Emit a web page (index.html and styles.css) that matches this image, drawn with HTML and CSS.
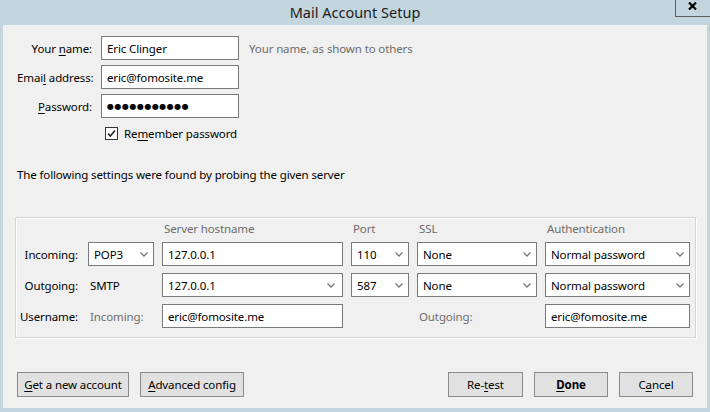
FILE: index.html
```html
<!DOCTYPE html>
<html lang="en">
<head>
<meta charset="utf-8">
<title>Mail Account Setup</title>
<link rel="stylesheet" href="styles.css">
</head>
<body>
<div class="window">
  <div class="titlebar">
    <div class="title">Mail Account Setup</div>
    <div class="close">
      <svg width="9" height="8" viewBox="0 0 9 8"><path d="M1 0.5 L8 7.5 M8 0.5 L1 7.5" stroke="#000" stroke-width="2.2" fill="none"/></svg>
    </div>
  </div>
  <div class="content">
    <div class="form">
      <label class="lbl">Your <u>n</u>ame:</label>
      <div class="field">Eric Clinger</div>
      <div class="hint">Your name, as shown to others</div>

      <label class="lbl">Emai<u>l</u> address:</label>
      <div class="field">eric@fomosite.me</div>
      <div></div>

      <label class="lbl"><u>P</u>assword:</label>
      <div class="field pw">●●●●●●●●●●●</div>
      <div></div>

      <div></div>
      <div class="check-row">
        <span class="checkbox"><svg width="11" height="11" viewBox="0 0 11 11"><path d="M2 5.5 L4.3 8 L9 2.5" stroke="#222" stroke-width="1.6" fill="none"/></svg></span>
        <span>Re<u>m</u>ember password</span>
      </div>
      <div></div>
    </div>

    <p class="info">The following settings were found by probing the given server</p>

    <div class="servers">
      <div class="hdr c3">Server hostname</div>
      <div class="hdr c4">Port</div>
      <div class="hdr c5">SSL</div>
      <div class="hdr c6">Authentication</div>

      <div class="rlbl">Incoming:</div>
      <div class="field select">POP3<svg class="chev" width="8" height="5" viewBox="0 0 8 5"><path d="M0.5 0.5 L4 4 L7.5 0.5" stroke="#777" stroke-width="1.3" fill="none"/></svg></div>
      <div class="field">127.0.0.1</div>
      <div class="field select">110<svg class="chev" width="8" height="5" viewBox="0 0 8 5"><path d="M0.5 0.5 L4 4 L7.5 0.5" stroke="#777" stroke-width="1.3" fill="none"/></svg></div>
      <div class="field select">None<svg class="chev" width="8" height="5" viewBox="0 0 8 5"><path d="M0.5 0.5 L4 4 L7.5 0.5" stroke="#777" stroke-width="1.3" fill="none"/></svg></div>
      <div class="field select">Normal password<svg class="chev" width="8" height="5" viewBox="0 0 8 5"><path d="M0.5 0.5 L4 4 L7.5 0.5" stroke="#777" stroke-width="1.3" fill="none"/></svg></div>

      <div class="rlbl">Outgoing:</div>
      <div class="plain">SMTP</div>
      <div class="field select wide-chev">127.0.0.1<svg class="chev" width="8" height="5" viewBox="0 0 8 5"><path d="M0.5 0.5 L4 4 L7.5 0.5" stroke="#777" stroke-width="1.3" fill="none"/></svg></div>
      <div class="field select">587<svg class="chev" width="8" height="5" viewBox="0 0 8 5"><path d="M0.5 0.5 L4 4 L7.5 0.5" stroke="#777" stroke-width="1.3" fill="none"/></svg></div>
      <div class="field select">None<svg class="chev" width="8" height="5" viewBox="0 0 8 5"><path d="M0.5 0.5 L4 4 L7.5 0.5" stroke="#777" stroke-width="1.3" fill="none"/></svg></div>
      <div class="field select">Normal password<svg class="chev" width="8" height="5" viewBox="0 0 8 5"><path d="M0.5 0.5 L4 4 L7.5 0.5" stroke="#777" stroke-width="1.3" fill="none"/></svg></div>

      <div class="rlbl">Username:</div>
      <div class="plain muted">Incoming:</div>
      <div class="field">eric@fomosite.me</div>
      <div></div>
      <div class="plain muted">Outgoing:</div>
      <div class="field">eric@fomosite.me</div>
    </div>

    <div class="buttons">
      <button class="btn w-get"><u>G</u>et a new account</button>
      <button class="btn w-adv"><u>A</u>dvanced config</button>
      <div class="spacer"></div>
      <button class="btn w-retest">Re-<u>t</u>est</button>
      <button class="btn w-done"><u>D</u>one</button>
      <button class="btn w-cancel">C<u>a</u>ncel</button>
    </div>
  </div>
</div>
</body>
</html>
```
FILE: styles.css
```css
* { box-sizing: border-box; }
html, body { margin: 0; padding: 0; }
body {
  width: 710px;
  height: 412px;
  overflow: hidden;
  font-family: "Noto Sans", "Open Sans", sans-serif;
  font-size: 11.5px;
  letter-spacing: -0.12px;
  color: #000;
}
u { text-decoration: underline; text-underline-offset: 2px; }

.window {
  width: 710px;
  height: 412px;
  background: #c3d6dd;
  display: flex;
  flex-direction: column;
  padding: 0 3px 4px 3px;
}

.titlebar {
  height: 25px;
  margin: 0 -3px;
  display: grid;
  grid-template-columns: 1fr auto 1fr;
  align-items: start;
  overflow: hidden;
}
.title {
  grid-column: 2;
  font-size: 14.5px;
  letter-spacing: 0;
  line-height: 24px;
  color: #1c1c1c;
}
.close {
  grid-column: 3;
  justify-self: end;
  width: 36px;
  height: 17px;
  margin-right: -1px;
  border: 1px solid #5e5e5e;
  border-top: none;
  display: flex;
  align-items: flex-start;
  justify-content: center;
  padding: 2px 2px 0 0;
}

.content {
  flex: 1;
  background: #f0f0f0;
  padding: 11px 14px 0 14px;
  display: flex;
  flex-direction: column;
}

.form {
  display: grid;
  grid-template-columns: 75px 138px 1fr;
  grid-template-rows: 24px 24px 24px 20px;
  column-gap: 9px;
  row-gap: 5px;
  align-items: center;
}
.lbl { text-align: right; white-space: nowrap; }
.hint { color: #6d6d6d; margin-left: 1px; }

.field {
  height: 24px;
  border: 1px solid #7a7a7a;
  background: #fff;
  padding: 0 5px;
  display: flex;
  align-items: center;
  white-space: nowrap;
}
.pw {
  font-family: "DejaVu Sans", sans-serif;
  font-size: 8px;
  letter-spacing: 0.5px;
}
.check-row {
  display: flex;
  align-items: center;
  gap: 6px;
  padding-left: 4px;
  white-space: nowrap;
}
.checkbox {
  width: 13px;
  height: 13px;
  border: 1px solid #333;
  background: #fff;
  display: flex;
  align-items: center;
  justify-content: center;
}

.info {
  margin: 24px 0 0 0;
  line-height: 16px;
}

.servers {
  margin: 34px -3px 0 -2px;
  border: 1px solid #d5d5d5;
  box-shadow: inset 1px 1px 0 #fff, 1px 1px 0 #fff;
  padding: 4px 0 9px 4px;
  display: grid;
  grid-template-columns: 60px 66px 181px 58px 120px 145px;
  grid-template-rows: 13px 24px 24px 24px;
  column-gap: 8px;
  row-gap: 7px;
  align-items: center;
}
.hdr {
  color: #6d6d6d;
  line-height: 13px;
  padding-left: 2px;
  white-space: nowrap;
}
.c3 { grid-column: 3; }
.c4 { grid-column: 4; }
.c5 { grid-column: 5; }
.c6 { grid-column: 6; }
.rlbl { text-align: right; padding-right: 2px; }
.plain { padding-left: 2px; white-space: nowrap; }
.muted { color: #6d6d6d; }

.select { justify-content: space-between; padding-right: 5px; }
.wide-chev { padding-right: 7px; }
.chev { flex: none; }

.buttons {
  margin-top: 34px;
  display: flex;
  gap: 11px;
}
.spacer { flex: 1; }
.btn {
  height: 25px;
  border: 1px solid #8a8a8a;
  background: #e1e1e1;
  font-family: inherit;
  font-size: 11.5px;
  letter-spacing: -0.12px;
  color: #000;
  padding: 0;
  text-align: center;
}
.w-get { width: 112px; }
.w-adv { width: 104px; }
.w-retest { width: 75px; }
.w-done { width: 74px; font-weight: bold; }
.w-cancel { width: 74px; }
```
